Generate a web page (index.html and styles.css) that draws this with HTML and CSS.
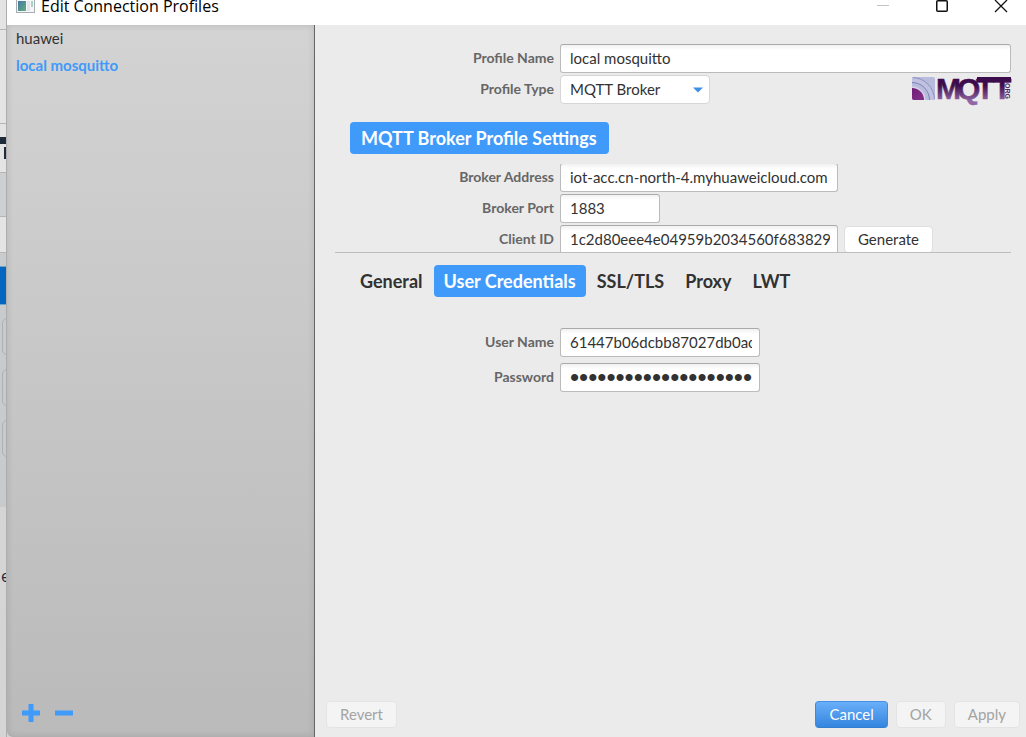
FILE: index.html
```html
<!DOCTYPE html>
<html lang="en">
<head>
<meta charset="utf-8">
<title>Edit Connection Profiles</title>
<link rel="stylesheet" href="styles.css">
</head>
<body>
<div class="desktop">
  <div class="backdrop" aria-hidden="true">
    <div class="strip strip-top"></div>
    <div class="strip strip-tools"></div>
    <div class="strip strip-mark"><svg width="7" height="49"><path d="M0 13h7v7H0zM4 23h3v12H4z" fill="#1e2b3a"/></svg></div>
    <div class="strip strip-band"></div>
    <div class="strip strip-row"></div>
    <div class="strip strip-gap"></div>
    <div class="strip strip-active"></div>
    <div class="strip strip-list"><span class="stub"></span><span class="stub"></span><span class="stub"></span></div>
    <div class="strip strip-bottom">e</div>
  </div>
  <main class="window">
    <header class="titlebar">
      <svg class="app-icon" width="19" height="14" viewBox="0 0 19 14"><defs><linearGradient id="pane" x1="0" y1="0" x2="1" y2="1"><stop offset="0" stop-color="#4677a8"/><stop offset="1" stop-color="#5fae7c"/></linearGradient></defs><rect x=".5" y="-2" width="18" height="14.500" fill="#f4f6f8" stroke="#a9adb2"/><path d="M2 1h8v10H2z" fill="url(#pane)"/><path d="M11 1h3v10h-3z" fill="#e4e7ea"/><path d="M15 1h2v6h-2z" fill="#a9d3c4"/></svg>
      <h1 class="title">Edit Connection Profiles</h1>
      <div class="window-controls">
        <button class="control" aria-label="Minimize" disabled><svg width="14" height="14"><path d="M1 5.500h12" stroke="#c4c4c4"/></svg></button>
        <button class="control" aria-label="Maximize"><svg width="14" height="14"><rect x="1.750" y=".750" width="10.500" height="10.500" rx="1" fill="none" stroke="#111" stroke-width="1.500"/></svg></button>
        <button class="control" aria-label="Close"><svg width="14" height="14"><path d="M1 0l12 12M13 0l-12 12" stroke="#111" stroke-width="1.300"/></svg></button>
      </div>
    </header>
    <div class="body">
      <aside class="sidebar">
        <ul class="profiles">
          <li class="profile">huawei</li>
          <li class="profile selected">local mosquitto</li>
        </ul>
        <div class="sidebar-actions">
          <button class="icon-button" aria-label="Add profile"><svg width="18" height="18"><path d="M6.500 0h5v6.500H18v5h-6.500V18h-5v-6.500H0v-5h6.500z" fill="#3f9afa"/></svg></button>
          <button class="icon-button" aria-label="Remove profile"><svg width="18" height="18"><path d="M0 6.500h18v5H0z" fill="#3f9afa"/></svg></button>
        </div>
      </aside>
      <section class="content">
        <div class="identity">
          <div class="row"><label for="name">Profile Name</label><input id="name" class="field grow" type="text" value="local mosquitto"></div>
          <div class="row">
            <label for="type">Profile Type</label>
            <div class="select-wrap"><select id="type"><option>MQTT Broker</option></select><svg class="arrow" width="10" height="6"><path d="M0 .5h10L5 5.500z" fill="#3f8fe6"/></svg></div>
            <svg class="logo" width="100" height="28" viewBox="0 0 100 28" role="img" aria-label="MQTT.org">
              <defs>
                <linearGradient id="ink" gradientUnits="userSpaceOnUse" x1="0" y1="1" x2="0" y2="25"><stop offset=".35" stop-color="#3c0c4c"/><stop offset="1" stop-color="#9266a4"/></linearGradient>
                <linearGradient id="core" x1="0" y1="0" x2="1" y2="1"><stop offset="0" stop-color="#65136d"/><stop offset="1" stop-color="#8d3b91"/></linearGradient>
                <clipPath id="tile"><rect x="1" y="1" width="23" height="23" rx="2"/></clipPath>
              </defs>
              <g clip-path="url(#tile)">
                <path d="M1 1h23v23H1z" fill="#b9bbdc"/>
                <circle cx="1" cy="24" r="22.500" fill="#c0c2e0" stroke="#8a90c2"/>
                <circle cx="1" cy="24" r="17.500" fill="#b9bbdd" stroke="#7a82ba"/>
                <circle cx="1" cy="24" r="13.500" fill="#d6d2e8"/>
                <circle cx="1" cy="24" r="12" fill="url(#core)"/>
              </g>
              <text class="logo-name" x="25 46 65 82" y="23" fill="url(#ink)" stroke="url(#ink)" stroke-width=".5">MQTT</text>
              <path d="M66 1h34v4H66z" fill="#3c0c4c"/>
              <text class="logo-org" transform="translate(94 5) rotate(90)" fill="#53245f">.ORG</text>
            </svg>
          </div>
        </div>
        <h2 class="heading">MQTT Broker Profile Settings</h2>
        <div class="broker">
          <div class="row"><label for="address">Broker Address</label><input id="address" class="field wide" type="text" value="iot-acc.cn-north-4.myhuaweicloud.com"></div>
          <div class="row"><label for="port">Broker Port</label><input id="port" class="field short" type="text" value="1883"></div>
          <div class="row"><label for="client">Client ID</label><input id="client" class="field wide" type="text" value="1c2d80eee4e04959b2034560f683829"><button class="button generate">Generate</button></div>
        </div>
        <nav class="tabs" role="tablist">
          <button class="tab" role="tab">General</button>
          <button class="tab active" role="tab" aria-selected="true">User Credentials</button>
          <button class="tab" role="tab">SSL/TLS</button>
          <button class="tab" role="tab">Proxy</button>
          <button class="tab" role="tab">LWT</button>
        </nav>
        <div class="credentials">
          <div class="row"><label for="user">User Name</label><input id="user" class="field medium" type="text" value="61447b06dcbb87027db0ac"></div>
          <div class="row"><label for="password">Password</label><input id="password" class="field medium password" type="password" value="xxxxxxxxxxxxxxxxxxxx"></div>
        </div>
        <footer class="footer">
          <button class="button" disabled>Revert</button>
          <span class="spacer"></span>
          <button class="button primary">Cancel</button>
          <button class="button" disabled>OK</button>
          <button class="button" disabled>Apply</button>
        </footer>
      </section>
    </div>
  </main>
</div>
</body>
</html>
```
FILE: styles.css
```css
* { box-sizing: border-box; }
body {
  margin: 0;
  overflow: hidden;
  background: #d2d3d4;
  color: #323232;
  font-family: Lato, "Liberation Sans", sans-serif;
  font-size: 15px;
}
button, input, select { font: inherit; color: inherit; margin: 0; }
svg { display: block; flex: none; }
.desktop { display: flex; min-height: 100vh; }

/* Application behind the dialog */
.backdrop { width: 7px; flex: none; display: flex; flex-direction: column; overflow: hidden; border-right: 1px solid #adadad; }
.strip { flex: none; overflow: hidden; border-bottom: 1px solid #b5b5b5; background: #e4e4e4; }
.strip-top { height: 30px; }
.strip-tools { height: 94px; }
.strip-mark { height: 49px; }
.strip-band { height: 44px; background: #cdd0d3; }
.strip-row { height: 36px; }
.strip-gap { height: 13px; background: #c9cbcd; border: 0; }
.strip-active { height: 39px; background: #0566bf; border: 1px solid #6aa7cf; border-width: 1px 0; }
.strip-list { height: 202px; padding: 13px 0 0 2px; background: #c8cacc; border: 0; }
.stub { display: block; width: 12px; height: 37px; margin-bottom: 14px; border: 1px solid #aeb0b2; border-radius: 5px; }
.strip-bottom { flex: 1; padding: 59px 0 0 1px; border: 0; background: #d5d5d5; color: #1e2b3a; font-family: "Open Sans", sans-serif; font-size: 16px; line-height: 20px; }

.window { flex: 1; min-width: 0; display: flex; flex-direction: column; }
.titlebar { height: 25px; display: flex; align-items: flex-start; padding: 0 18px 0 9px; background: #fff; }
.title { margin: 0 0 0 6px; color: #000; font-family: "Open Sans", sans-serif; font-size: 16px; font-weight: 400; line-height: 13px; white-space: nowrap; }
.window-controls { display: flex; gap: 45px; margin-left: auto; }
.control, .icon-button { padding: 0; border: 0; background: none; }
.body { flex: 1; display: flex; }
.sidebar {
  width: 308px;
  flex: none;
  display: flex;
  flex-direction: column;
  border-right: 1px solid #666;
  border-bottom-left-radius: 6px;
  background: linear-gradient(#d3d3d3, #bababa);
  box-shadow: inset 0 0 7px rgba(0, 0, 0, .12);
}
.profiles { margin: 0; padding: 0 9px; list-style: none; }
.profile { height: 27px; line-height: 27px; }
.selected { color: #3f9afa; font-weight: 700; }
.sidebar-actions { display: flex; gap: 15px; margin-top: auto; padding: 0 15px 15px; }

.content { flex: 1; min-width: 0; display: flex; flex-direction: column; background: #ebebeb; padding: 19px 0 0; }
.row { display: flex; align-items: center; }
.row label { width: 220px; flex: none; margin-right: 6px; color: #666; font-size: 14px; font-weight: 700; text-align: right; line-height: 26px; padding-bottom: 1px; }
.identity { display: flex; flex-direction: column; gap: 2px; padding: 0 15px 0 19px; }
.field {
  height: 29px;
  min-width: 0;
  padding: 0 7px 2px 9px;
  border: 1px solid #bbb;
  border-top-color: #aaa;
  border-radius: 3px;
  background: linear-gradient(#f1f1f1, #fff 5px);
  outline: 0;
}
.grow { flex: 1; }
.wide { width: 278px; }
.short { width: 100px; }
.medium { width: 200px; }
.password { padding: 0 7px 0 9px; font-family: "Liberation Sans", Arial, sans-serif; font-size: 26px; }
.select-wrap { position: relative; width: 150px; }
select { width: 100%; height: 29px; padding: 0 9px 2px; appearance: none; border: 1px solid #d6d6d6; border-radius: 4px; background: #fff; }
.arrow { position: absolute; right: 7px; top: 12px; pointer-events: none; }
.logo { margin-left: auto; height: 28px; overflow: visible; }
.logo-name { font: 700 30px "Liberation Sans", Arial, sans-serif; }
.logo-org { font: 700 7px "Liberation Sans", Arial, sans-serif; }

.heading, .tab { height: 32px; padding: 0 10px; border-radius: 4px; font-size: 18px; font-weight: 700; line-height: 32px; white-space: nowrap; }
.heading { align-self: flex-start; margin: 18px 0 10px 35px; padding: 0 12px 0 11px; background: #3f9afa; color: #fff; }
.broker { display: flex; flex-direction: column; gap: 2px; height: 89px; margin: 0 15px 0 20px; overflow: hidden; border-bottom: 1px solid #bebebe; }
.broker .row:first-child { margin-top: -1px; }
.broker label { width: 219px; }
.tabs { display: flex; gap: 1px; margin: 12px 35px 31px; }
.tab { border: 0; background: none; }
.active { background: #3f9afa; color: #fff; }
.credentials { display: flex; flex-direction: column; gap: 6px; padding-left: 19px; }
.footer { display: flex; align-items: center; gap: 8px; margin-top: auto; padding: 0 6px 9px 11px; }
.spacer { flex: 1; }
.button { height: 27px; padding: 0 13px; border: 1px solid #dedede; border-radius: 4px; background: #fff; line-height: 25px; }
.button:disabled { background: #f4f4f4; border-color: #e4e4e4; color: #a3a3a3; }
.generate { margin-left: 6px; }
.primary { border-color: #4691e5 #3d8be1 #347ed0; background: linear-gradient(#69aff9, #3585df); color: #fff; }
```
